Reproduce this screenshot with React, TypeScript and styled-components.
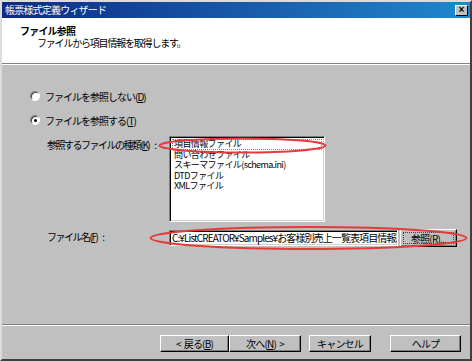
import React from "react";
import styled, { createGlobalStyle } from "styled-components";

const GlobalStyle = createGlobalStyle`
  html, body {
    margin: 0;
    padding: 0;
    background: #c0c0c0;
  }
  body {
    font-family: "Noto Sans CJK JP", "Liberation Sans", sans-serif;
    font-size: 10px;
    color: #000;
  }
`;

const Window = styled.div`
  position: relative;
  width: 472px;
  height: 361px;
  box-sizing: border-box;
  background: #c0c0c0;
  border-top: 2px solid #dcdcdc;
  border-left: 2px solid #dcdcdc;
  border-right: 2px solid #404040;
  border-bottom: 2px solid #404040;
  display: flex;
  flex-direction: column;
  overflow: hidden;
`;

const TitleBar = styled.div`
  height: 16px;
  flex: none;
  background: linear-gradient(to right, #0c2a86, #1a62b0 60%, #2088cc);
  display: flex;
  align-items: center;
  justify-content: space-between;
  padding: 0 2px 0 3px;
`;

const TitleText = styled.span`
  color: #fff;
  font-size: 10px;
  letter-spacing: -0.8px;
  line-height: 16px;
`;

const CloseButton = styled.div`
  width: 13px;
  height: 11px;
  box-sizing: border-box;
  background: #c0c0c0;
  border-top: 1px solid #fff;
  border-left: 1px solid #fff;
  border-right: 1px solid #000;
  border-bottom: 1px solid #000;
  display: flex;
  align-items: center;
  justify-content: center;
  font-family: "Liberation Sans", sans-serif;
  font-weight: bold;
  font-size: 10px;
  line-height: 1;
`;

const Header = styled.div`
  height: 46px;
  flex: none;
  background: #fff;
  border-bottom: 1px solid #808080;
  box-shadow: 0 1px 0 #fff;
  box-sizing: border-box;
  padding: 6px 0 0 18px;
`;

const HeaderTitle = styled.div`
  font-weight: bold;
  font-size: 10px;
  letter-spacing: -0.8px;
  line-height: 13px;
`;

const HeaderSub = styled.div`
  padding-left: 17px;
  font-size: 10px;
  letter-spacing: -1.2px;
  line-height: 12px;
`;

const Body = styled.div`
  flex: 1;
  margin-top: 1px;
  padding-top: 24px;
  display: flex;
  flex-direction: column;
`;

const RadioRow = styled.label<{ $gap?: number }>`
  display: flex;
  align-items: center;
  gap: 5px;
  padding-left: 28px;
  height: 14px;
  margin-bottom: ${(p) => p.$gap ?? 0}px;
  letter-spacing: -1px;
`;

const RadioCircle = styled.span<{ $checked?: boolean }>`
  position: relative;
  width: 10px;
  height: 10px;
  border-radius: 50%;
  box-sizing: border-box;
  background: #fff;
  border: 1px solid;
  border-color: #808080 #fff #fff #808080;
  box-shadow: inset 1px 1px 0 #404040;
  &::after {
    content: "";
    display: ${(p) => (p.$checked ? "block" : "none")};
    position: absolute;
    left: 3px;
    top: 3px;
    width: 3px;
    height: 3px;
    border-radius: 50%;
    background: #000;
  }
`;

const FormGrid = styled.div`
  display: grid;
  grid-template-columns: 122px 1fr;
  padding-left: 45px;
  margin-top: 9px;
  row-gap: 7px;
`;

const FieldLabel = styled.div<{ $top?: number }>`
  padding-top: ${(p) => p.$top ?? 0}px;
  letter-spacing: -1.5px;
  line-height: 12px;
  white-space: nowrap;
`;

const Colon = styled.span`
  margin-left: 5px;
`;

const ListBox = styled.div`
  width: 156px;
  height: 86px;
  box-sizing: border-box;
  background: #fff;
  border-top: 1px solid #808080;
  border-left: 1px solid #808080;
  border-right: 1px solid #fff;
  border-bottom: 1px solid #fff;
  box-shadow: inset 1px 1px 0 #000, inset -1px -1px 0 #d4d0c8;
  padding: 2px;
  overflow: hidden;
`;

const ListItem = styled.div<{ $focus?: boolean }>`
  height: 10.6px;
  line-height: 10.6px;
  font-size: 9px;
  padding-left: 2px;
  letter-spacing: -0.6px;
  white-space: nowrap;
  outline: ${(p) => (p.$focus ? "1px dotted #808080" : "none")};
  outline-offset: -1px;
`;

const FileRow = styled.div`
  display: flex;
  align-items: center;
  gap: 2px;
`;

const TextInput = styled.div`
  width: 229px;
  height: 16px;
  box-sizing: border-box;
  background: #fff;
  border-top: 1px solid #808080;
  border-left: 1px solid #808080;
  border-right: 1px solid #fff;
  border-bottom: 1px solid #fff;
  box-shadow: inset 1px 1px 0 #000, inset -1px -1px 0 #d4d0c8;
  padding: 0 2px;
  line-height: 14px;
  white-space: nowrap;
  overflow: hidden;
  letter-spacing: -0.9px;
`;

const Button = styled.div<{ $w: number; $h?: number; $dotted?: boolean }>`
  width: ${(p) => p.$w}px;
  height: ${(p) => p.$h ?? 17}px;
  box-sizing: border-box;
  background: #c0c0c0;
  border-top: 1px solid #fff;
  border-left: 1px solid #fff;
  border-right: 1px solid #000;
  border-bottom: 1px solid #000;
  box-shadow: inset -1px -1px 0 #808080;
  display: flex;
  align-items: center;
  justify-content: center;
  gap: 3px;
  letter-spacing: -0.8px;
  white-space: nowrap;
  outline: ${(p) => (p.$dotted ? "1px dotted #404040" : "none")};
  outline-offset: -4px;
`;

const Footer = styled.div`
  flex: none;
  height: 35px;
  border-top: 1px solid #808080;
  box-shadow: inset 0 1px 0 #fff;
  box-sizing: border-box;
  display: flex;
  align-items: flex-start;
  padding: 10px 9px 0 0;
  justify-content: flex-end;
`;

const ButtonGroup = styled.div<{ $gap: number }>`
  display: flex;
  margin-left: ${(p) => p.$gap}px;
`;

const Overlay = styled.svg`
  position: absolute;
  left: -2px;
  top: -2px;
  width: 472px;
  height: 361px;
  pointer-events: none;
`;

const Key = styled.span`
  text-decoration: underline;
`;

const App = () => {
  const items = [
    "項目情報ファイル",
    "問い合わせファイル",
    "スキーマファイル(schema.ini)",
    "DTDファイル",
    "XMLファイル",
  ];

  return (
    <>
      <GlobalStyle />
      <Window>
        <TitleBar>
          <TitleText>帳票様式定義ウィザード</TitleText>
          <CloseButton>×</CloseButton>
        </TitleBar>
        <Header>
          <HeaderTitle>ファイル参照</HeaderTitle>
          <HeaderSub>ファイルから項目情報を取得します。</HeaderSub>
        </Header>
        <Body>
          <RadioRow $gap={10}>
            <RadioCircle />
            <span>
              ファイルを参照しない(<Key>D</Key>)
            </span>
          </RadioRow>
          <RadioRow>
            <RadioCircle $checked />
            <span>
              ファイルを参照する(<Key>T</Key>)
            </span>
          </RadioRow>
          <FormGrid>
            <FieldLabel $top={3}>
              参照するファイルの種類(<Key>K</Key>)<Colon>:</Colon>
            </FieldLabel>
            <ListBox>
              {items.map((it, i) => (
                <ListItem key={it} $focus={i === 0}>
                  {it}
                </ListItem>
              ))}
            </ListBox>
            <FieldLabel $top={2}>
              ファイル名(<Key>F</Key>)<Colon>:</Colon>
            </FieldLabel>
            <FileRow>
              <TextInput>C:¥ListCREATOR¥Samples¥お客様別売上一覧表項目情報.txt</TextInput>
              <Button $w={57} $h={18} $dotted>
                <span>
                  参照(<Key>R</Key>)...
                </span>
              </Button>
            </FileRow>
          </FormGrid>
        </Body>
        <Footer>
          <ButtonGroup $gap={0}>
            <Button $w={69}>
              <span>&lt;</span>
              <span>
                戻る(<Key>B</Key>)
              </span>
            </Button>
            <Button $w={72}>
              <span>
                次へ(<Key>N</Key>)
              </span>
              <span>&gt;</span>
            </Button>
          </ButtonGroup>
          <ButtonGroup $gap={8}>
            <Button $w={62}>キャンセル</Button>
          </ButtonGroup>
          <ButtonGroup $gap={19}>
            <Button $w={71}>ヘルプ</Button>
          </ButtonGroup>
        </Footer>
        <Overlay viewBox="0 0 472 361">
          <ellipse cx="242.5" cy="145.5" rx="83" ry="7" fill="none" stroke="#e43a3a" strokeWidth="2" />
          <ellipse cx="308.5" cy="238" rx="158" ry="11" fill="none" stroke="#e43a3a" strokeWidth="2" />
        </Overlay>
      </Window>
    </>
  );
};

export default App;
